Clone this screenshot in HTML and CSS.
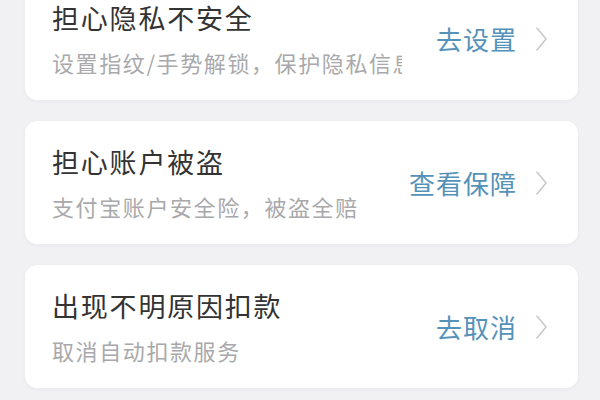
FILE: index.html
```html
<!DOCTYPE html>
<html lang="zh-CN">
<head>
<meta charset="utf-8">
<link rel="stylesheet" href="styles.css">
</head>
<body>
<div class="list">
  <div class="card">
    <div class="info">
      <div class="title">担心隐私不安全</div>
      <div class="sub">设置指纹/手势解锁，保护隐私信息</div>
    </div>
    <div class="action"><span class="link">去设置</span>
      <svg class="chev" width="13" height="26" viewBox="0 0 13 26"><polyline points="2,2 11,13 2,24" fill="none" stroke="#c9c9cb" stroke-width="1.6" stroke-linecap="round" stroke-linejoin="round"/></svg>
    </div>
  </div>
  <div class="card">
    <div class="info">
      <div class="title">担心账户被盗</div>
      <div class="sub">支付宝账户安全险，被盗全赔</div>
    </div>
    <div class="action"><span class="link">查看保障</span>
      <svg class="chev" width="13" height="26" viewBox="0 0 13 26"><polyline points="2,2 11,13 2,24" fill="none" stroke="#c9c9cb" stroke-width="1.6" stroke-linecap="round" stroke-linejoin="round"/></svg>
    </div>
  </div>
  <div class="card">
    <div class="info">
      <div class="title">出现不明原因扣款</div>
      <div class="sub">取消自动扣款服务</div>
    </div>
    <div class="action"><span class="link">去取消</span>
      <svg class="chev" width="13" height="26" viewBox="0 0 13 26"><polyline points="2,2 11,13 2,24" fill="none" stroke="#c9c9cb" stroke-width="1.6" stroke-linecap="round" stroke-linejoin="round"/></svg>
    </div>
  </div>
</div>
</body>
</html>
```
FILE: styles.css
```css
html, body {
  margin: 0;
  padding: 0;
  height: 100%;
  overflow: hidden;
}
body {
  background: #f1f1f3;
  font-family: "Noto Sans CJK SC", "Noto Sans", sans-serif;
}
.list {
  display: flex;
  flex-direction: column;
  gap: 21px;
  margin-top: -23px;
  padding: 0 22px 0 25px;
}
.card {
  height: 123px;
  box-sizing: border-box;
  background: #ffffff;
  border-radius: 12px;
  box-shadow: 0 1px 4px rgba(0, 0, 0, 0.04);
  display: flex;
  align-items: center;
  padding: 0 30px 0 27px;
}
.info {
  width: 350px;
  display: flex;
  flex-direction: column;
}
.title {
  font-size: 27px;
  line-height: 36px;
  letter-spacing: 1.8px;
  color: #333333;
  white-space: nowrap;
}
.sub {
  margin-top: 10px;
  font-size: 22px;
  line-height: 32px;
  letter-spacing: 1.6px;
  color: #a9a9ab;
  white-space: nowrap;
  overflow: hidden;
}
.action {
  margin-left: auto;
  display: flex;
  align-items: center;
  gap: 18px;
}
.link {
  font-size: 26px;
  line-height: 36px;
  letter-spacing: 1px;
  color: #5592b9;
}
.chev {
  display: block;
}
```
